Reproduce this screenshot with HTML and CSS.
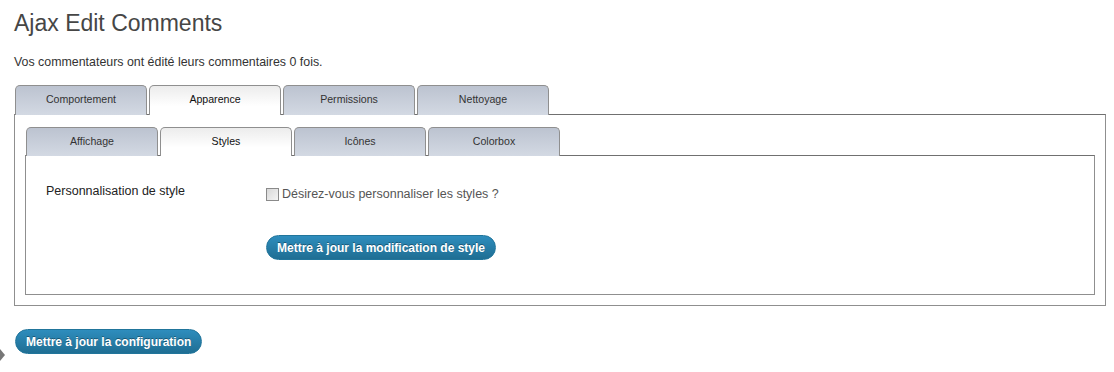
FILE: index.html
```html
<html>
<head>
    <meta charset="utf-8">
    <title>Ajax Edit Comments</title>
    <link rel="stylesheet" href="styles.css">
</head>

<body>
    <div class="wrap">
        <h2 class="title">Ajax Edit Comments</h2>
        <p class="intro">Vos commentateurs ont édité leurs commentaires 0 fois.</p>

        <div class="tabs">
            <ul class="tabs__nav">
                <li class="tabs__item">Comportement</li>
                <li class="tabs__item tabs__item--active">Apparence</li>
                <li class="tabs__item">Permissions</li>
                <li class="tabs__item">Nettoyage</li>
            </ul>
            <div class="tabs__panel">
                <div class="tabs tabs--inner">
                    <ul class="tabs__nav">
                        <li class="tabs__item">Affichage</li>
                        <li class="tabs__item tabs__item--active">Styles</li>
                        <li class="tabs__item">Icônes</li>
                        <li class="tabs__item">Colorbox</li>
                    </ul>
                    <div class="tabs__panel tabs__panel--inner">
                        <div class="form-row">
                            <div class="form-row__label">Personnalisation de style</div>
                            <div class="form-row__field">
                                <label class="check">
                                    <span class="check__box"></span>Désirez-vous personnaliser les styles ?
                                </label>
                                <button class="button-primary button-primary--style">Mettre à jour la modification de style</button>
                            </div>
                        </div>
                    </div>
                </div>
            </div>
        </div>

        <div class="footer">
            <span class="collapse-arrow"></span>
            <button class="button-primary">Mettre à jour la configuration</button>
        </div>
    </div>
</body>
</html>
```

FILE: styles.css
```css
body {
    margin: 0;
    background-color: #fff;
    font-family: 'Liberation Sans', Arial, Helvetica, sans-serif;
    color: #333;
}

.wrap {
    padding: 0 8px 0 14px;
}

.title {
    margin: 0;
    padding: 10px 0 0 0;
    height: 30px;
    font-size: 23px;
    font-weight: normal;
    color: #464646;
}

.intro {
    margin: 15px 0 16px 0;
    font-size: 12.4px;
    color: #333;
}

.tabs__nav {
    display: flex;
    align-items: flex-end;
    margin: 0;
    padding: 0 0 0 1px;
    list-style: none;
}

.tabs__item {
    position: relative;
    z-index: 1;
    width: 130px;
    height: 29px;
    margin: 0 2px -1px 0;
    border: 1px solid #8f8f8f;
    border-bottom: none;
    border-radius: 5px 5px 0 0;
    background: linear-gradient(#bcc3d0, #d3d9e3);
    font-size: 10.6px;
    line-height: 27px;
    text-align: center;
    color: #333;
}

.tabs__item--active {
    background: linear-gradient(#ececec, #fff 70%);
    color: #111;
}

.tabs__panel {
    padding: 12px 10px 10px 10px;
    border: 1px solid #8f8f8f;
    border-top-color: #707070;
}

.tabs--inner .tabs__item {
    height: 28px;
    line-height: 26px;
}

.tabs__panel--inner {
    height: 138px;
    padding: 0 20px;
}

.form-row {
    display: flex;
    padding-top: 28px;
    font-size: 12.5px;
}

.form-row__label {
    width: 220px;
    color: #222;
}

.form-row__field {
    display: flex;
    flex-direction: column;
    align-items: flex-start;
}

.check {
    display: flex;
    align-items: center;
    margin-top: 3px;
    color: #555;
}

.check__box {
    width: 11px;
    height: 11px;
    margin-right: 3px;
    border: 1px solid #8a8a8a;
    background: linear-gradient(135deg, #d8d8d8, #f4f4f4);
}

.button-primary {
    height: 25px;
    padding: 0 10px;
    border: 1px solid #21759b;
    border-radius: 13px;
    background: linear-gradient(#2e8dbd, #1f6e93);
    font-family: 'Liberation Sans', Arial, Helvetica, sans-serif;
    font-size: 12px;
    font-weight: bold;
    color: #fff;
    text-shadow: 0 -1px 0 rgba(0, 0, 0, 0.35);
}

.button-primary--style {
    margin-top: 34px;
}

.footer {
    display: flex;
    align-items: flex-start;
    margin: 23px 0 0 -14px;
}

.collapse-arrow {
    width: 0;
    height: 0;
    margin: 20px 10px 0 0;
    border-top: 6px solid transparent;
    border-bottom: 6px solid transparent;
    border-left: 5px solid #777;
}
```
